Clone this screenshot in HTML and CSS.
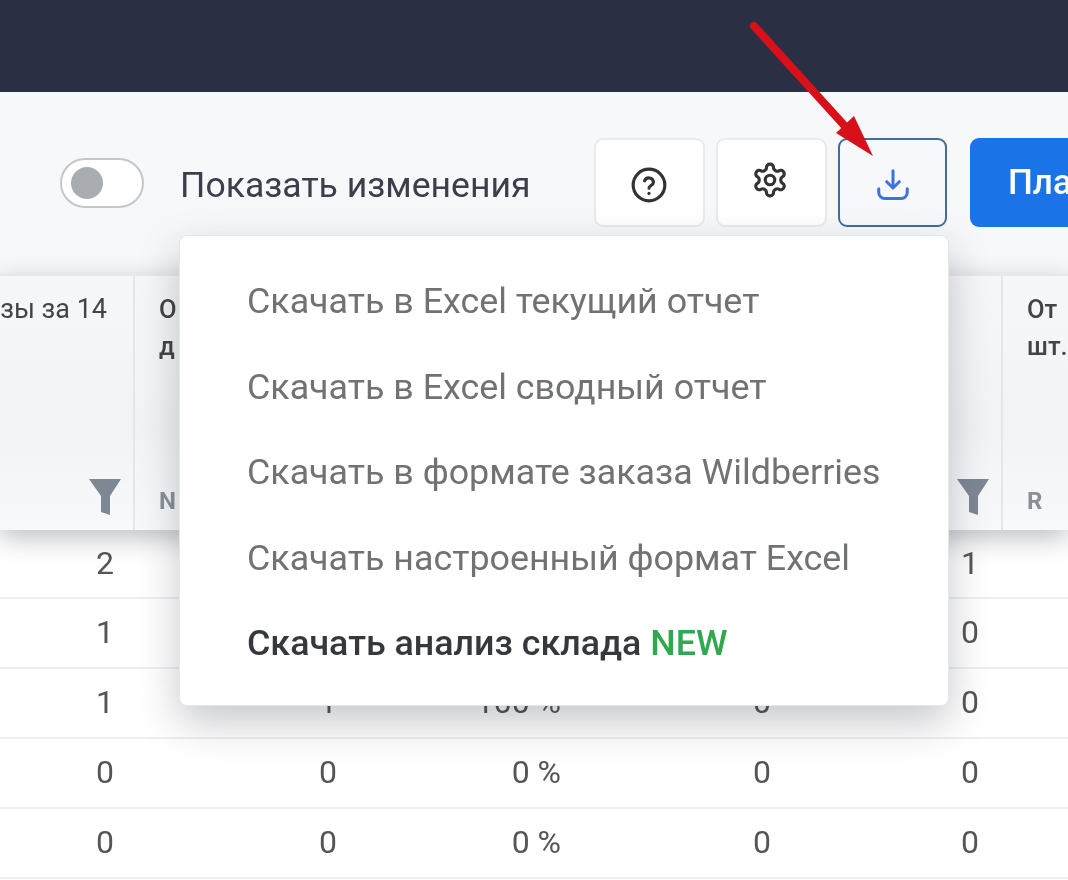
FILE: index.html
```html
<!DOCTYPE html>
<html lang="ru">
<head>
<meta charset="utf-8">
<title>Отчет</title>
<link rel="stylesheet" href="styles.css">
</head>
<body>
<div class="page">
  <div class="topbar"></div>
  <div class="toolbar">
    <span class="toggle"><span class="knob"></span></span>
    <span class="toggle-label">Показать изменения</span>
    <div class="actions">
      <button class="icon-btn help-btn"><svg class="ico" width="38" height="38" viewBox="0 0 24 24"><circle cx="12" cy="12" r="10"/><path d="M9.2 9.4a2.9 2.9 0 0 1 5.6.8c0 1.9-2.8 2.3-2.8 3.8"/><path d="M12 17.2v.1"/></svg></button>
      <button class="icon-btn gear-btn"><svg class="ico" width="38" height="38" viewBox="0 0 24 24"><path d="M12.2 2h-.4a2 2 0 0 0-2 2v.2a2 2 0 0 1-1 1.7l-.4.3a2 2 0 0 1-2 0l-.2-.1a2 2 0 0 0-2.7.7l-.2.4a2 2 0 0 0 .7 2.7l.2.1a2 2 0 0 1 1 1.7v.6a2 2 0 0 1-1 1.7l-.2.1a2 2 0 0 0-.7 2.7l.2.4a2 2 0 0 0 2.7.7l.2-.1a2 2 0 0 1 2 0l.4.3a2 2 0 0 1 1 1.7v.2a2 2 0 0 0 2 2h.4a2 2 0 0 0 2-2v-.2a2 2 0 0 1 1-1.7l.4-.3a2 2 0 0 1 2 0l.2.1a2 2 0 0 0 2.7-.7l.2-.4a2 2 0 0 0-.7-2.7l-.2-.1a2 2 0 0 1-1-1.7v-.6a2 2 0 0 1 1-1.7l.2-.1a2 2 0 0 0 .7-2.7l-.2-.4a2 2 0 0 0-2.7-.7l-.2.1a2 2 0 0 1-2 0l-.4-.3a2 2 0 0 1-1-1.7V4a2 2 0 0 0-2-2z"/><circle cx="12" cy="12" r="3"/></svg></button>
      <button class="icon-btn active"><svg class="ico" width="36" height="36" viewBox="0 0 24 24"><path d="M12 2.5v11"/><path d="M7.800 9.800l4.200 4.200 4.200-4.200"/><path d="M2.500 14.500v2.500a4 4 0 0 0 4 4h11a4 4 0 0 0 4-4v-2.500"/></svg></button>
      <button class="primary">Пла</button>
    </div>
  </div>
  <div class="table">
    <div class="head">
      <div class="hcell first"><span class="htext">зы за 14</span><svg class="funnel" width="34" height="40" viewBox="0 0 34 40"><path d="M1 2h32L22 19v19l-9-3V19z"/></svg></div>
      <div class="hcell"><span class="htitle">О<br>д</span><span class="code">N</span></div>
      <div class="hcell"></div>
      <div class="hcell"></div>
      <div class="hcell"><svg class="funnel" width="34" height="40" viewBox="0 0 34 40"><path d="M1 2h32L22 19v19l-9-3V19z"/></svg></div>
      <div class="hcell last"><span class="htitle">От<br>шт.</span><span class="code">R</span></div>
    </div>
    <div class="row short"><span>2</span><span></span><span></span><span></span><span>1</span><span></span></div>
    <div class="row"><span>1</span><span></span><span></span><span></span><span>0</span><span></span></div>
    <div class="row"><span>1</span><span>1</span><span>100 %</span><span>0</span><span>0</span><span></span></div>
    <div class="row"><span>0</span><span>0</span><span>0 %</span><span>0</span><span>0</span><span></span></div>
    <div class="row"><span>0</span><span>0</span><span>0 %</span><span>0</span><span>0</span><span></span></div>
  </div>
  <div class="menu">
    <div class="menu-item">Скачать в Excel текущий отчет</div>
    <div class="menu-item">Скачать в Excel сводный отчет</div>
    <div class="menu-item">Скачать в формате заказа Wildberries</div>
    <div class="menu-item">Скачать настроенный формат Excel</div>
    <div class="menu-item strong">Скачать анализ склада <span class="new">NEW</span></div>
  </div>
  <svg class="arrow" width="1068" height="200" viewBox="0 0 1068 200"><path class="arrow-line" d="M754 26L853 135"/><path class="arrow-head" d="M836 133L854 116L873 156z"/></svg>
</div>
</body>
</html>
```
FILE: styles.css
```css
* { box-sizing: border-box; }
html, body { margin: 0; padding: 0; background: #fff; }
.page {
  position: relative;
  width: 1068px;
  height: 880px;
  overflow: hidden;
  font-family: Roboto, "Noto Sans", sans-serif;
  filter: blur(0.7px);
}
.topbar { height: 92px; background: #2b2f44; }
.toolbar {
  height: 182px;
  padding: 46px 0 0 60px;
  display: flex;
  align-items: flex-start;
  background: #f6f8fa;
}
.toggle {
  width: 84px;
  height: 50px;
  margin-top: 20px;
  padding: 7px 9px;
  border: 2px solid #c4c7ca;
  border-radius: 25px;
  background: #fff;
  flex: none;
}
.knob { display: block; width: 32px; height: 32px; border-radius: 50%; background: #a9adb2; }
.toggle-label {
  margin-left: 36px;
  width: 351px;
  flex: none;
  font-size: 35.6px;
  line-height: 94px;
  white-space: nowrap;
  color: #3a3f4b;
}
.actions { margin-left: 63px; display: flex; gap: 11px; flex: none; }
.icon-btn {
  width: 111px;
  height: 89px;
  padding: 4px 0 0;
  display: flex;
  align-items: center;
  justify-content: center;
  border: 2px solid #e9eaec;
  border-radius: 9px;
  background: #fff;
  color: #333;
}
.icon-btn.help-btn { padding-right: 2px; }
.icon-btn.gear-btn { padding: 0 3px 6px 0; }
.ico { fill: none; stroke: currentColor; stroke-width: 2; stroke-linecap: round; stroke-linejoin: round; }
.icon-btn.active {
  width: 109px;
  border-color: #3d6f9f;
  background: #f6f8fb;
  color: #3f72d8;
}
.primary {
  margin-left: 12px;
  width: 200px;
  height: 89px;
  padding: 0 0 0 38px;
  border: 0;
  border-radius: 9px;
  background: #1b73e8;
  color: #fff;
  font: 500 35px Roboto, sans-serif;
  text-align: left;
}
.table { background: #fff; }
.head, .row {
  display: grid;
  grid-template-columns: 135px 223px 224px 210px 211px 65px;
}
.head {
  height: 256px;
  position: relative;
  border-top: 2px solid #e6e8eb;
  background: linear-gradient(#f6f7f9, #f1f3f6 60%, #f8f9fb);
  box-shadow: 0 8px 24px rgba(40, 45, 60, .3);
}
.hcell {
  position: relative;
  padding: 15px 0 0 24px;
  border-right: 2px solid #e4e6ea;
  font-size: 25.5px;
  line-height: 37px;
  color: #444;
  overflow: hidden;
}
.hcell.first { padding: 15px 26px 0 0; display: flex; justify-content: flex-end; }
.hcell.last { padding-left: 24px; border-right: 0; white-space: nowrap; }
.htext { white-space: nowrap; flex: none; font-size: 27px; }
.htitle { display: block; height: 191px; font-weight: 500; }
.code { font-weight: 700; font-size: 24px; color: #8a9099; }
.funnel { position: absolute; right: 11px; bottom: 13px; fill: #7e8794; }
.row {
  height: 70px;
  position: relative;
  border-bottom: 2px solid #eef0f2;
  font-size: 32px;
  line-height: 66px;
  color: #555;
  text-align: right;
}
.row.short { height: 69px; }
.row span { padding-right: 21px; }
.row span:nth-child(5) { padding-right: 24px; }
.menu {
  position: absolute;
  left: 179px;
  top: 235px;
  width: 770px;
  height: 471px;
  padding: 23px 0 0 67px;
  border-radius: 8px;
  border: 1px solid #e6e7e9;
  background: #fff;
  box-shadow: 0 16px 40px rgba(30, 35, 50, .25);
}
.menu-item {
  height: 85.5px;
  line-height: 85px;
  font-size: 35.8px;
  color: #707274;
  white-space: nowrap;
}
.menu-item.strong { font-weight: 500; color: #35383c; }
.new { color: #2fa84f; }
.arrow { position: absolute; left: 0; top: 0; }
.arrow-line { fill: none; stroke: #d8101a; stroke-width: 8; stroke-linecap: round; }
.arrow-head { fill: #d8101a; }
```
